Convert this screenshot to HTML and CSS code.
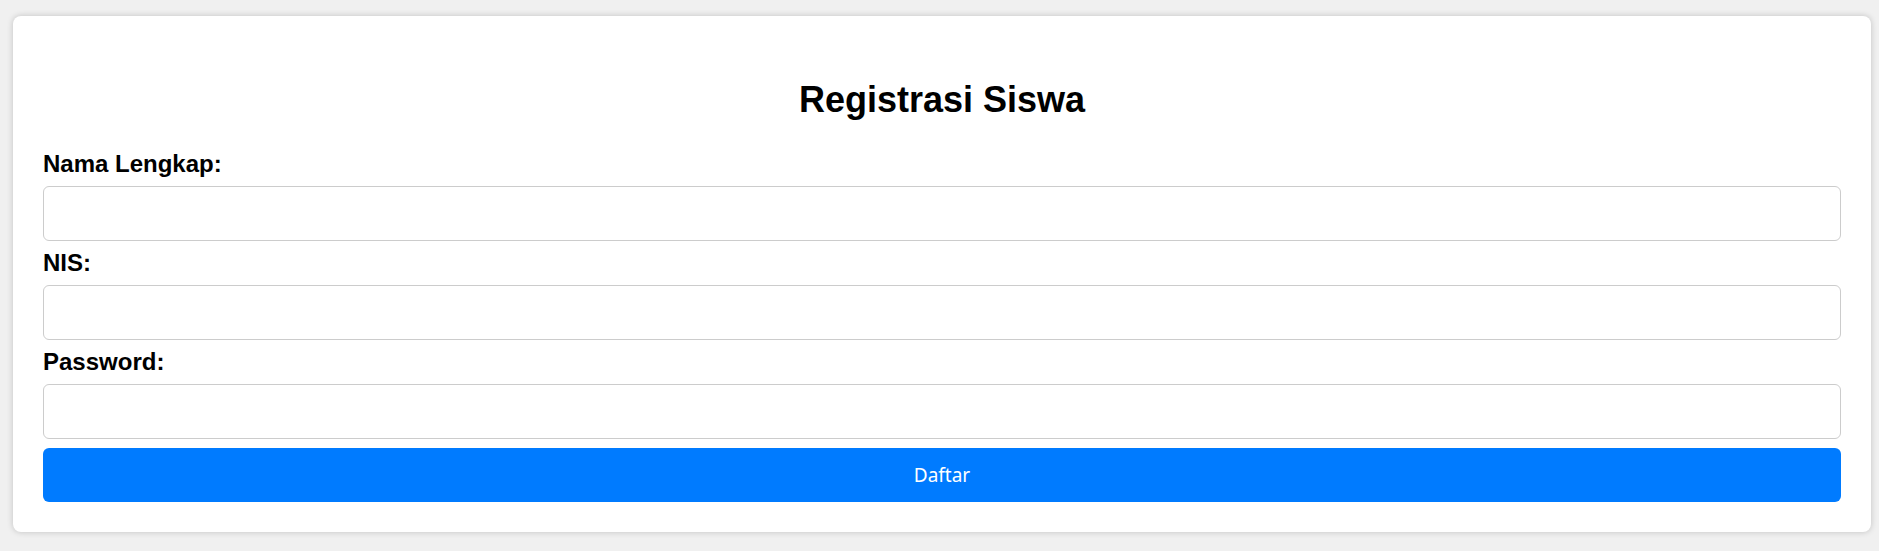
FILE: index.html
```html
<!DOCTYPE html>
<html lang="id">
<head>
<meta charset="utf-8">
<title>Registrasi Siswa</title>
<link rel="stylesheet" href="styles.css">
</head>
<body>
  <div class="card">
    <h2 class="title">Registrasi Siswa</h2>
    <form class="form">
      <label class="label" for="nama">Nama Lengkap:</label>
      <input class="input" type="text" id="nama">
      <label class="label" for="nis">NIS:</label>
      <input class="input" type="text" id="nis">
      <label class="label" for="pw">Password:</label>
      <input class="input" type="password" id="pw">
      <button class="button" type="button">Daftar</button>
    </form>
  </div>
</body>
</html>
```

FILE: styles.css
```css
html, body {
  margin: 0;
  background: #f0f0f0;
}
body {
  padding: 16px 8px 20px 13px;
  font-family: "Liberation Sans", Arial, sans-serif;
}
.card {
  background: #fff;
  border-radius: 8px;
  box-shadow: 0 0 6px rgba(0, 0, 0, 0.2);
  padding: 30px;
}
.title {
  margin: 33px 0 29px;
  text-align: center;
  font-size: 36px;
  font-weight: bold;
  line-height: normal;
  color: #000;
}
.form {
  display: flex;
  flex-direction: column;
  gap: 8px;
}
.label {
  font-size: 24px;
  font-weight: bold;
  color: #000;
  line-height: normal;
}
.input {
  box-sizing: border-box;
  height: 55px;
  width: 100%;
  border: 1px solid #ccc;
  border-radius: 6px;
  margin: 0;
  padding: 0 12px;
  font-size: 19px;
  background: #fff;
}
.button {
  margin-top: 1px;
  height: 54px;
  border: none;
  border-radius: 6px;
  background: #007bff;
  color: #fff;
  font-family: "Noto Sans", "DejaVu Sans", sans-serif;
  font-size: 19px;
}
```
